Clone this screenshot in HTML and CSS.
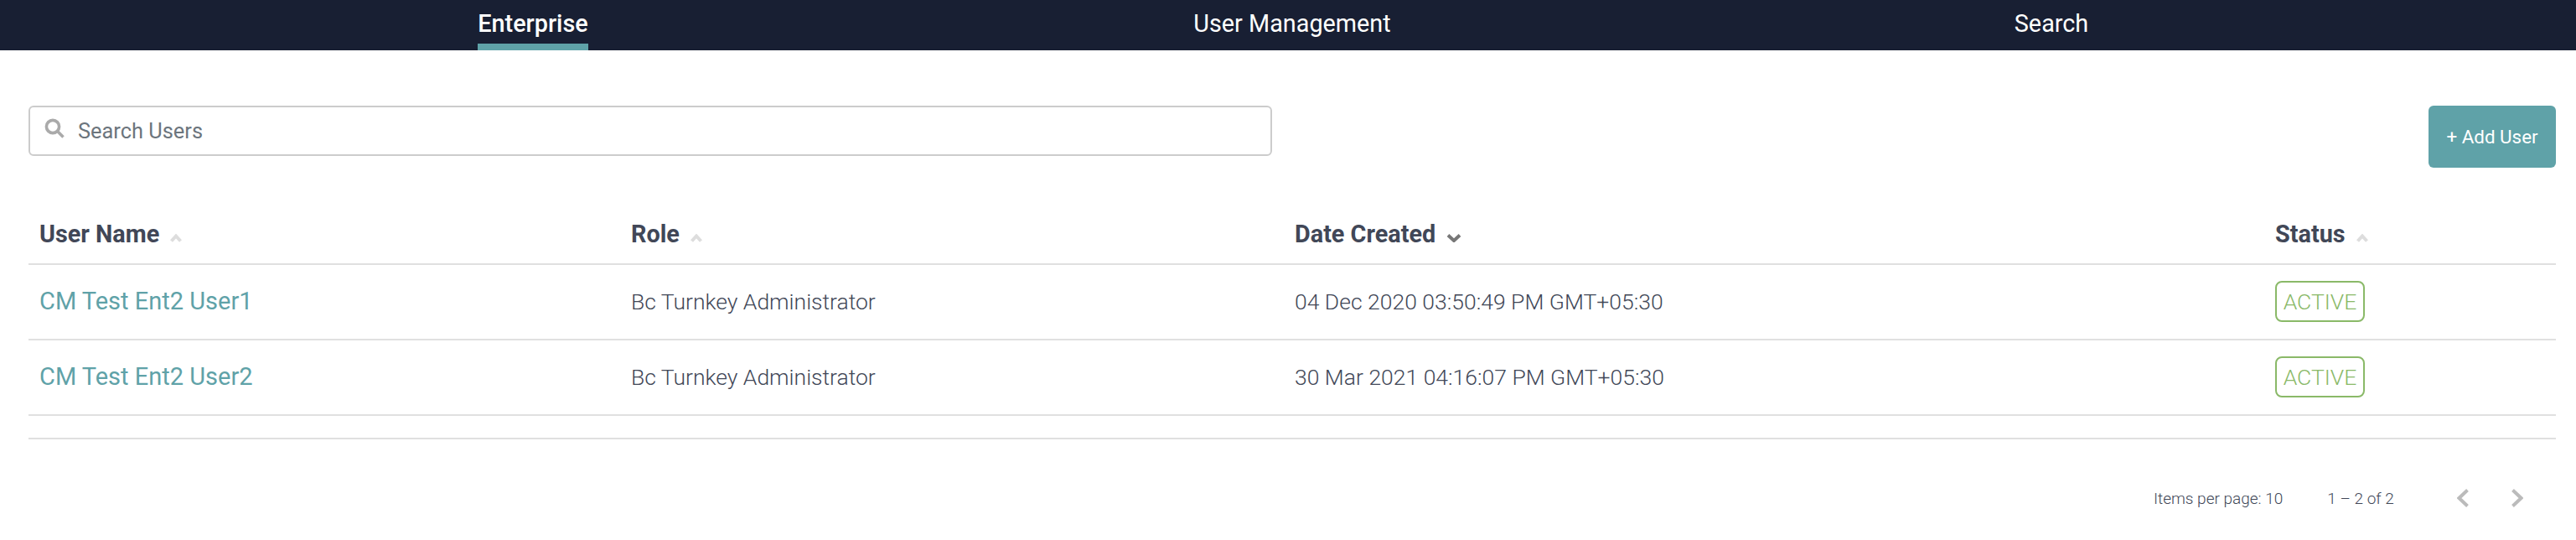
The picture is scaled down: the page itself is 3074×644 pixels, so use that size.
FILE: index.html
```html
<!DOCTYPE html>
<html>

<head>
    <link rel="stylesheet" href="styles.css">
</head>

<body>
    <nav class="top-nav">
        <a class="nav-item active"><span>Enterprise</span></a>
        <a class="nav-item"><span>User Management</span></a>
        <a class="nav-item"><span>Search</span></a>
    </nav>

    <div class="content">
        <div class="toolbar">
            <div class="search-box">
                <svg class="search-icon" viewBox="0 0 24 24" width="24" height="24">
                    <circle cx="10" cy="10" r="7.6" />
                    <path d="M15.6 15.6 L22.5 22.5" />
                </svg>
                <span>Search Users</span>
            </div>
            <button class="add-btn">+ Add User</button>
        </div>

        <table class="users-table">
            <thead>
                <tr>
                    <th class="col-name">User Name <svg class="sort" viewBox="0 0 14 10" width="14" height="10"><path d="M1.5 8.5 L7 2.5 L12.5 8.5" /></svg></th>
                    <th class="col-role">Role <svg class="sort" viewBox="0 0 14 10" width="14" height="10"><path d="M1.5 8.5 L7 2.5 L12.5 8.5" /></svg></th>
                    <th class="col-date">Date Created <svg class="sort sort-on" viewBox="0 0 18 11" width="18" height="11"><path d="M2 2.5 L9 9 L16 2.5" /></svg></th>
                    <th class="col-status">Status <svg class="sort" viewBox="0 0 14 10" width="14" height="10"><path d="M1.5 8.5 L7 2.5 L12.5 8.5" /></svg></th>
                </tr>
            </thead>
            <tbody>
                <tr>
                    <td><a class="user-link">CM Test Ent2 User1</a></td>
                    <td>Bc Turnkey Administrator</td>
                    <td>04 Dec 2020 03:50:49 PM GMT+05:30</td>
                    <td><span class="badge">ACTIVE</span></td>
                </tr>
                <tr>
                    <td><a class="user-link">CM Test Ent2 User2</a></td>
                    <td>Bc Turnkey Administrator</td>
                    <td>30 Mar 2021 04:16:07 PM GMT+05:30</td>
                    <td><span class="badge">ACTIVE</span></td>
                </tr>
                <tr class="spacer">
                    <td colspan="4"></td>
                </tr>
            </tbody>
        </table>

        <div class="paginator">
            <span class="per-page">Items per page: 10</span>
            <span class="range">1 – 2 of 2</span>
            <svg class="page-arrow" viewBox="0 0 14 22" width="14" height="22"><path d="M12.5 1.5 L2.5 11 L12.5 20.5" /></svg>
            <svg class="page-arrow next" viewBox="0 0 14 22" width="14" height="22"><path d="M1.5 1.5 L11.5 11 L1.5 20.5" /></svg>
        </div>
    </div>
</body>

</html>
```

FILE: styles.css
```css
html,
body {
    margin: 0;
    height: 100%;
    overflow: hidden;
}

body {
    font-family: Roboto, "Liberation Sans", sans-serif;
    color: #414757;
    background-color: #fff;
}

.top-nav {
    display: flex;
    height: 60px;
    padding: 0 173px 0 183px;
    background-color: #181f33;
}

.nav-item {
    flex: 1;
    display: flex;
    justify-content: center;
    color: #fff;
    font-size: 28.8px;
}

.nav-item span {
    height: 52px;
    line-height: 56px;
}

.nav-item.active span {
    font-weight: 500;
    border-bottom: 8px solid #5fa2a8;
}

.content {
    padding: 66px 24px 0 34px;
}

.toolbar {
    display: flex;
    justify-content: space-between;
    align-items: flex-start;
    height: 74px;
}

.search-box {
    display: flex;
    align-items: center;
    box-sizing: border-box;
    width: 1484px;
    height: 60px;
    padding-left: 17px;
    border: 2px solid #ccc;
    border-radius: 6px;
    color: #6c757d;
    font-size: 25.4px;
}

.search-icon {
    margin-right: 16px;
    margin-top: -6px;
    fill: none;
    stroke: #aaa;
    stroke-width: 3.6;
}

.add-btn {
    width: 152px;
    height: 74px;
    padding: 0;
    border: none;
    border-radius: 6px;
    background-color: #5fa2a8;
    color: #fff;
    font-family: inherit;
    font-size: 22.4px;
}

.users-table {
    width: 3016px;
    margin-top: 45px;
    border-collapse: collapse;
    table-layout: fixed;
}

.users-table th {
    height: 67px;
    padding: 0 0 2px 13px;
    border-bottom: 2px solid #e0e0e0;
    text-align: left;
    font-size: 28.8px;
    font-weight: 700;
}

.users-table td {
    height: 86px;
    padding: 0 0 2px 13px;
    border-bottom: 2px solid #e0e0e0;
    font-size: 26.5px;
    font-weight: 300;
}

.col-name {
    width: 693px;
}

.col-role {
    width: 779px;
}

.col-date {
    width: 1157px;
}

.sort {
    margin-left: 6px;
    fill: none;
    stroke: #ddd;
    stroke-width: 4;
}

.sort-on {
    stroke: #777;
}

.user-link {
    color: #5fa2a8;
    font-size: 29px;
    font-weight: 400;
}

.badge {
    display: inline-block;
    box-sizing: border-box;
    width: 107px;
    height: 49px;
    border: 2px solid #8ab968;
    border-radius: 8px;
    color: #8ab968;
    line-height: 45px;
    text-align: center;
}

.users-table .spacer td {
    height: 24px;
}

.paginator {
    display: flex;
    align-items: center;
    height: 42px;
    margin-top: 49px;
    padding-left: 2536px;
    font-size: 19px;
    font-weight: 300;
}

.range {
    margin-left: 53px;
}

.page-arrow {
    margin-left: 75px;
    fill: none;
    stroke: #bbb;
    stroke-width: 4;
}

.page-arrow.next {
    margin-left: 51px;
}
```
